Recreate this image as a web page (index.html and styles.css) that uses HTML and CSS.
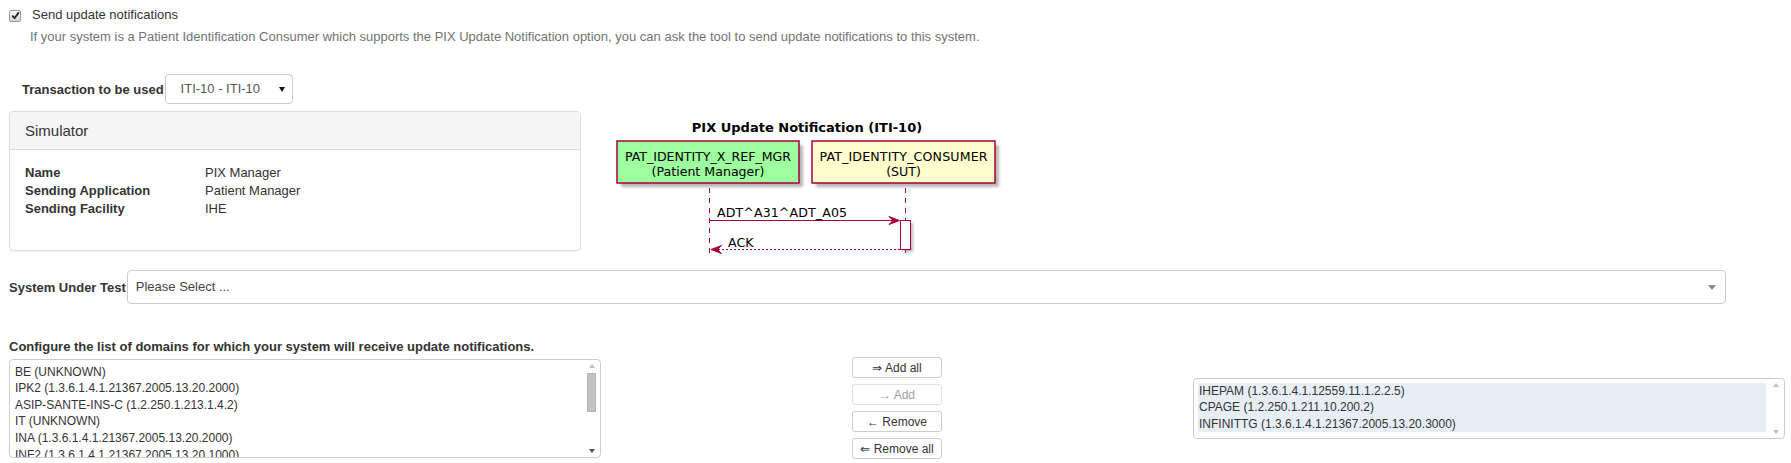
FILE: index.html
```html
<!DOCTYPE html>
<html>
<head>
    <meta charset="UTF-8">
    <title>PIX Update Notification</title>
    <link rel="stylesheet" href="styles.css">
</head>
<body>
    <div class="page">
        <label class="check-line">
            <span class="checkbox">
                <svg width="9" height="9" viewBox="0 0 9 9"><path d="M1.2 4.6 L3.6 7.2 L7.8 1.4" fill="none" stroke="#222" stroke-width="1.8"/></svg>
            </span>
            Send update notifications
        </label>
        <p class="help">If your system is a Patient Identification Consumer which supports the PIX Update Notification option, you can ask the tool to send update notifications to this system.</p>

        <div class="transaction">
            <label class="field-label">Transaction to be used</label>
            <div class="select-box">ITI-10 - ITI-10<span class="caret"></span></div>
        </div>

        <div class="sim-row">
            <div class="panel">
                <div class="panel-heading">Simulator</div>
                <div class="panel-body">
                    <dl class="info">
                        <dt>Name</dt><dd>PIX Manager</dd>
                        <dt>Sending Application</dt><dd>Patient Manager</dd>
                        <dt>Sending Facility</dt><dd>IHE</dd>
                    </dl>
                </div>
            </div>

            <svg class="diagram" width="420" height="140" viewBox="0 0 420 140">
                <defs>
                    <filter id="shadow" x="-10%" y="-10%" width="130%" height="140%">
                        <feGaussianBlur stdDeviation="1.5"/>
                    </filter>
                </defs>
                <text class="title" x="207" y="20.5" text-anchor="middle">PIX Update Notification (ITI-10)</text>

                <rect x="21" y="34" width="182" height="42" fill="#888" opacity="0.6" filter="url(#shadow)"/>
                <rect x="17" y="30" width="182" height="42" fill="#9eff9e" stroke="#a80036" stroke-width="1.5"/>
                <text x="108" y="49.5" text-anchor="middle" textLength="166">PAT_IDENTITY_X_REF_MGR</text>
                <text x="108" y="64.5" text-anchor="middle">(Patient Manager)</text>

                <rect x="216" y="34" width="183" height="42" fill="#888" opacity="0.6" filter="url(#shadow)"/>
                <rect x="212" y="30" width="183" height="42" fill="#fefece" stroke="#a80036" stroke-width="1.5"/>
                <text x="303.5" y="49.5" text-anchor="middle" textLength="168">PAT_IDENTITY_CONSUMER</text>
                <text x="303.5" y="64.5" text-anchor="middle">(SUT)</text>

                <line x1="109.5" y1="77" x2="109.5" y2="144" class="lifeline"/>
                <line x1="305.5" y1="77" x2="305.5" y2="144" class="lifeline"/>

                <rect x="303" y="112" width="10" height="29" fill="#888" opacity="0.6" filter="url(#shadow)"/>
                <rect x="300.5" y="109.5" width="10" height="29" fill="#fff" stroke="#a80036"/>

                <text x="117" y="105.5" textLength="130">ADT^A31^ADT_A05</text>
                <line x1="109.5" y1="109.5" x2="296" y2="109.5" stroke="#a80036"/>
                <path d="M289,105.5 L299.5,109.5 L289,113.5 L293,109.5 Z" fill="#a80036" stroke="#a80036"/>

                <text x="128" y="135.5">ACK</text>
                <line x1="300" y1="138.5" x2="114" y2="138.5" stroke="#a80036" stroke-dasharray="2,2"/>
                <path d="M121.5,134.5 L111,138.5 L121.5,142.5 L117.5,138.5 Z" fill="#a80036" stroke="#a80036"/>
            </svg>
        </div>

        <div class="sut-row">
            <label class="field-label">System Under Test</label>
            <div class="select2">Please Select ...<span class="s2-arrow"></span></div>
        </div>

        <h4 class="domains-title">Configure the list of domains for which your system will receive update notifications.</h4>

        <div class="picklist">
            <div class="listbox source">
                <div class="items">
                    <div class="item">BE (UNKNOWN)</div>
                    <div class="item">IPK2 (1.3.6.1.4.1.21367.2005.13.20.2000)</div>
                    <div class="item">ASIP-SANTE-INS-C (1.2.250.1.213.1.4.2)</div>
                    <div class="item">IT (UNKNOWN)</div>
                    <div class="item">INA (1.3.6.1.4.1.21367.2005.13.20.2000)</div>
                    <div class="item">INF2 (1.3.6.1.4.1.21367.2005.13.20.1000)</div>
                    <div class="item">INFINITT (1.3.6.1.4.1.21367.2005.13.20.3000)</div>
                </div>
                <div class="scrollbar">
                    <span class="arrow up"></span>
                    <span class="thumb"></span>
                    <span class="arrow down dark"></span>
                </div>
            </div>

            <div class="pick-buttons">
                <button class="pick-btn">&rArr; Add all</button>
                <button class="pick-btn" disabled>&rarr; Add</button>
                <button class="pick-btn">&larr; Remove</button>
                <button class="pick-btn">&lArr; Remove all</button>
            </div>

            <div class="listbox target">
                <div class="items">
                    <div class="item selected">IHEPAM (1.3.6.1.4.1.12559.11.1.2.2.5)</div>
                    <div class="item selected">CPAGE (1.2.250.1.211.10.200.2)</div>
                    <div class="item selected">INFINITTG (1.3.6.1.4.1.21367.2005.13.20.3000)</div>
                </div>
                <div class="scrollbar">
                    <span class="arrow up"></span>
                    <span class="arrow down"></span>
                </div>
            </div>
        </div>
    </div>
</body>
</html>
```

FILE: styles.css
```css
body {
    margin: 0;
    font-family: "Liberation Sans", Arial, sans-serif;
    font-size: 13px;
    color: #333;
    background: #fff;
}

.page {
    padding: 5px 6px 0 9px;
}

.check-line {
    display: flex;
    align-items: center;
    height: 20px;
    line-height: 20px;
}

.checkbox {
    display: flex;
    align-items: center;
    justify-content: center;
    width: 10px;
    height: 10px;
    margin: 1px 11px 0 0;
    border: 1px solid #9a9a9a;
    border-radius: 2px;
    background: linear-gradient(#f4f4f4, #d8d8d8);
}

.help {
    margin: 2px 0 0 21px;
    line-height: 20px;
    color: #737373;
}

.transaction {
    display: flex;
    align-items: center;
    margin-top: 27px;
    padding-left: 13px;
}

.field-label {
    font-weight: bold;
    white-space: nowrap;
}

.select-box {
    position: relative;
    box-sizing: border-box;
    width: 128px;
    height: 30px;
    margin-left: 1px;
    padding-left: 15px;
    line-height: 28px;
    border: 1px solid #ccc;
    border-radius: 4px;
    color: #555;
}

.caret {
    position: absolute;
    right: 7px;
    top: 12px;
    border-left: 3.5px solid transparent;
    border-right: 3.5px solid transparent;
    border-top: 5px solid #111;
}

.sim-row {
    display: flex;
    align-items: flex-start;
    margin-top: 7px;
}

.panel {
    box-sizing: border-box;
    width: 572px;
    border: 1px solid #ddd;
    border-radius: 4px;
    box-shadow: 0 1px 1px rgba(0, 0, 0, 0.05);
}

.panel-heading {
    height: 37px;
    line-height: 37px;
    padding: 0 15px;
    font-size: 15px;
    background: #f5f5f5;
    border-bottom: 1px solid #ddd;
    border-radius: 3px 3px 0 0;
}

.panel-body {
    padding: 14px 15px 32px;
}

.info {
    display: grid;
    grid-template-columns: 180px 1fr;
    margin: 0;
    line-height: 18px;
}

.info dt {
    font-weight: bold;
}

.info dd {
    margin: 0;
}

.diagram {
    margin-left: 19px;
    overflow: visible;
    font-family: "DejaVu Sans", sans-serif;
    font-size: 12.6px;
}

.diagram .title {
    font-weight: bold;
    font-size: 13px;
}

.lifeline {
    stroke: #a80036;
    stroke-dasharray: 5, 5;
}

.sut-row {
    display: flex;
    align-items: center;
    margin-top: 19px;
}

.select2 {
    position: relative;
    flex: 1;
    box-sizing: border-box;
    height: 34px;
    margin: 0 59px 0 1px;
    padding-left: 8px;
    line-height: 32px;
    border: 1px solid #ccc;
    border-radius: 4px;
    color: #444;
}

.s2-arrow {
    position: absolute;
    right: 9px;
    top: 14px;
    border-left: 4px solid transparent;
    border-right: 4px solid transparent;
    border-top: 5px solid #888;
}

.domains-title {
    margin: 33px 0 0;
    font-size: 13px;
    line-height: 20px;
    font-weight: bold;
}

.picklist {
    display: grid;
    grid-template-columns: 1fr 1fr 1fr;
    align-items: center;
    height: 102px;
}

.listbox {
    display: flex;
    box-sizing: border-box;
    border: 1px solid #ccc;
    border-radius: 4px;
    font-size: 12px;
    overflow: hidden;
}

.listbox.source {
    height: 99px;
}

.listbox.target {
    height: 61px;
}

.items {
    flex: 1;
    padding: 4px 3px 0 4px;
    overflow: hidden;
}

.item {
    padding-left: 1px;
    height: 16.67px;
    line-height: 16.67px;
    white-space: nowrap;
}

.item.selected {
    background: #e8eef6;
}

.scrollbar {
    position: relative;
    width: 15px;
}

.arrow {
    position: absolute;
    left: 4px;
    border-left: 3.5px solid transparent;
    border-right: 3.5px solid transparent;
}

.arrow.up {
    top: 4px;
    border-bottom: 4px solid #c0c0c0;
}

.arrow.down {
    bottom: 4px;
    border-top: 4px solid #c0c0c0;
}

.arrow.down.dark {
    border-top-color: #505050;
}

.thumb {
    position: absolute;
    left: 2px;
    top: 13px;
    width: 9px;
    height: 39px;
    background: #c1c1c1;
    border: 1px solid #b4b4b4;
    box-sizing: border-box;
}

.pick-buttons {
    display: flex;
    flex-direction: column;
    align-items: center;
    gap: 6px;
}

.pick-btn {
    box-sizing: border-box;
    width: 90px;
    height: 21px;
    padding: 0;
    font-family: "Liberation Sans", Arial, sans-serif;
    font-size: 12px;
    color: #333;
    background: #fff;
    border: 1px solid #ccc;
    border-radius: 3px;
}

.pick-btn:disabled {
    color: #a0a0a0;
    border-color: #e2e2e2;
}
```
